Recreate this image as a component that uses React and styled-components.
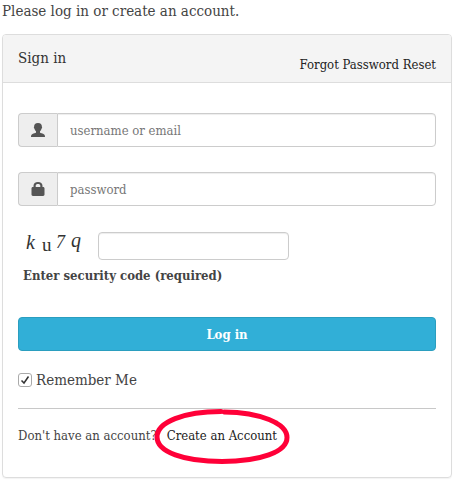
import { useState } from "react";
import styled, { createGlobalStyle } from "styled-components";

const GlobalStyle = createGlobalStyle`
  * {
    box-sizing: border-box;
  }

  body {
    margin: 0;
    background: #fff;
    color: #444;
    font-family: "DejaVu Serif Condensed", "DejaVu Serif", serif;
    font-size: 15px;
    line-height: 22px;
  }

  input,
  button {
    font-family: inherit;
  }
`;

const Page = styled.main`
  padding: 0 1px 2px 2px;
`;

const Intro = styled.p`
  margin: 0 0 12px;
`;

const Panel = styled.section`
  border: 1px solid #ddd;
  border-radius: 4px;
  box-shadow: 0 1px 1px rgba(0, 0, 0, 0.05);
`;

const PanelHeader = styled.header`
  display: flex;
  justify-content: space-between;
  align-items: flex-end;
  padding: 12px 15px 6px;
  border-bottom: 1px solid #ddd;
  border-radius: 3px 3px 0 0;
  background: #f4f4f4;
`;

const Title = styled.h1`
  margin: 0 0 7px;
  color: #333;
  font-size: 15px;
  font-weight: 400;
`;

const TextLink = styled.a`
  color: #222;
  font-size: 13px;
  text-decoration: none;
`;

const Form = styled.form`
  padding: 30px 15px;
`;

const InputGroup = styled.div`
  display: flex;
  height: 34px;
  margin-bottom: 25px;
`;

const Addon = styled.label`
  display: flex;
  align-items: center;
  justify-content: center;
  width: 39px;
  border: 1px solid #ccc;
  border-right: 0;
  border-radius: 4px 0 0 4px;
  background: #eee;
`;

const TextInput = styled.input`
  flex: 1;
  min-width: 0;
  padding: 0 12px;
  border: 1px solid #ccc;
  border-radius: ${({ $grouped }) => ($grouped ? "0 4px 4px 0" : "4px")};
  box-shadow: inset 0 1px 1px rgba(0, 0, 0, 0.075);
  background: #fff;
  color: #555;
  font-size: 13px;

  &::placeholder {
    color: #777;
    opacity: 1;
  }
`;

const Captcha = styled.div`
  display: flex;
  align-items: stretch;
  gap: 8px;
  width: 271px;
  max-width: 100%;
  height: 28px;
  margin-top: 26px;
`;

const CodeLabel = styled.label`
  display: block;
  margin: 5px 0 30px 5px;
  font-size: 13px;
  font-weight: 700;
`;

const SubmitButton = styled.button`
  display: block;
  width: 100%;
  height: 34px;
  border: 1px solid #2b9ebf;
  border-radius: 4px;
  background: #31afd7;
  color: #fff;
  font-size: 13px;
  font-weight: 700;
  cursor: pointer;
`;

const Remember = styled.label`
  display: flex;
  align-items: center;
  gap: 4px;
  margin-top: 18px;
`;

const CheckBox = styled.input`
  appearance: none;
  width: 14px;
  height: 14px;
  margin: 0;
  border: 1px solid #aaa;
  border-radius: 3px;
  background: #fff;

  &:checked {
    background: #fff
      url("data:image/svg+xml,%3Csvg xmlns='http://www.w3.org/2000/svg' viewBox='0 0 12 12'%3E%3Cpath d='M2.5 6.5 5 9 9.5 2.5' fill='none' stroke='%23333' stroke-width='1.5'/%3E%3C/svg%3E");
  }
`;

const SignUp = styled.div`
  display: flex;
  flex-wrap: wrap;
  gap: 10px;
  margin-top: 17px;
  padding-top: 16px;
  border-top: 1px solid #c8c8c8;
  font-size: 13px;
`;

const Circled = styled.span`
  position: relative;
`;

const Ring = styled.svg`
  position: absolute;
  top: 50%;
  left: 50%;
  transform: translate(-50%, -50%);
  pointer-events: none;
`;

const UserIcon = () => (
  <svg width="14" height="14" viewBox="0 0 14 14" fill="#555" aria-hidden="true">
    <path d="M7 0C4.300 0 3 1.500 3.100 3.800c-.5.4-.2 1.600.4 2 .2 1.100.8 1.900 1.500 2.500v1.200C5 10.200 1.900 10.500.8 11.400.2 11.900 0 12.800 0 14h14c0-1.200-.2-2.100-.8-2.600C12.100 10.500 9 10.200 9 9.500V8.300c.7-.6 1.300-1.400 1.500-2.500.6-.4.9-1.600.4-2C11 1.500 9.700 0 7 0Z" />
  </svg>
);

const LockIcon = () => (
  <svg width="14" height="14" viewBox="0 0 14 14" fill="#555" aria-hidden="true">
    <path
      fillRule="evenodd"
      d="M2.500 5V3.800C2.500 1.500 4.200 0 7 0s4.500 1.500 4.500 3.800V5h.6c.8 0 1.400.6 1.400 1.400v6.200c0 .8-.6 1.400-1.400 1.400H1.900c-.8 0-1.400-.6-1.400-1.400V6.400C.5 5.600 1.100 5 1.900 5Zm2.200 0h4.600V3.800C9.300 2.600 8.400 2 7 2s-2.300.6-2.300 1.800Z"
    />
  </svg>
);

const CaptchaCode = () => (
  <svg width="72" height="28" viewBox="0 0 72 28" overflow="visible" fill="#333" fontFamily="Liberation Serif, serif">
    <text x="8" y="17" fontSize="20" fontStyle="italic">k</text>
    <text x="24" y="19" fontSize="19">u</text>
    <text x="38" y="16" fontSize="18" fontStyle="italic">7</text>
    <text x="53" y="15" fontSize="20" fontStyle="italic">q</text>
  </svg>
);

const App = () => {
  const [remember, setRemember] = useState(true);

  return (
    <>
      <GlobalStyle />
      <Page>
        <Intro>Please log in or create an account.</Intro>
        <Panel>
          <PanelHeader>
            <Title>Sign in</Title>
            <TextLink href="#reset">Forgot Password Reset</TextLink>
          </PanelHeader>
          <Form onSubmit={(e) => e.preventDefault()}>
            <InputGroup>
              <Addon htmlFor="username" aria-label="Username">
                <UserIcon />
              </Addon>
              <TextInput $grouped id="username" type="text" placeholder="username or email" />
            </InputGroup>
            <InputGroup>
              <Addon htmlFor="password" aria-label="Password">
                <LockIcon />
              </Addon>
              <TextInput $grouped id="password" type="password" placeholder="password" />
            </InputGroup>
            <Captcha>
              <CaptchaCode />
              <TextInput id="code" type="text" autoComplete="off" required />
            </Captcha>
            <CodeLabel htmlFor="code">Enter security code (required)</CodeLabel>
            <SubmitButton type="submit">Log in</SubmitButton>
            <Remember>
              <CheckBox
                type="checkbox"
                checked={remember}
                onChange={(e) => setRemember(e.target.checked)}
              />
              Remember Me
            </Remember>
            <SignUp>
              <span>Don't have an account?</span>
              <Circled>
                <TextLink href="#register">Create an Account</TextLink>
                <Ring width="138" height="58" viewBox="0 0 138 58" fill="none" stroke="#ff0038" aria-hidden="true">
                  <path
                    d="M68 4.500C31 4.500 4 15 4 30S31 54.500 69 54.500 134 45 134 30.500 107 5.500 71 5"
                    strokeWidth="5"
                    strokeLinecap="round"
                  />
                </Ring>
              </Circled>
            </SignUp>
          </Form>
        </Panel>
      </Page>
    </>
  );
};

export default App;
